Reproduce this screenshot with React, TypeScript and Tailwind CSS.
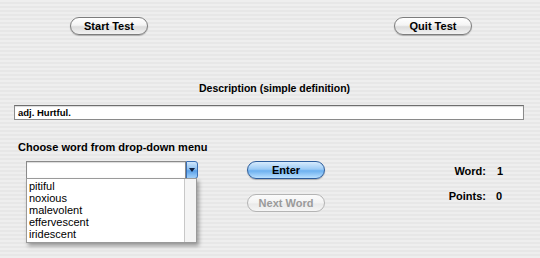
import React from "react";

const font = "font-['Lucida_Grande','Liberation_Sans',Arial,sans-serif]";

function AquaButton({ label, className = "" }: { label: string; className?: string }) {
  return (
    <div
      className={`h-[18px] w-[78px] rounded-full border border-[#7d7d7d] bg-[linear-gradient(to_bottom,#ffffff_0%,#f4f4f4_45%,#dcdcdc_55%,#f2f2f2_100%)] shadow-[0_1px_1px_rgba(0,0,0,0.25)] flex items-center justify-center text-[11px] font-bold text-black leading-none ${className}`}
    >
      {label}
    </div>
  );
}

export default function App() {
  const words = ["pitiful", "noxious", "malevolent", "effervescent", "iridescent"];
  return (
    <div
      className={`w-[540px] h-[258px] overflow-hidden ${font} text-black bg-[repeating-linear-gradient(to_bottom,#eeeeee_0px,#eeeeee_2px,#e7e7e7_2px,#e7e7e7_4px)] flex flex-col`}
    >
      <div className="flex pt-[17px] pl-[70px]">
        <AquaButton label="Start Test" />
        <AquaButton label="Quit Test" className="ml-[246px]" />
      </div>

      <div className="mt-[47px] pl-[199px] text-[10.5px] font-bold leading-[13px]">
        Description (simple definition)
      </div>

      <div className="mt-[10px] ml-[14px] w-[510px] h-[15px] bg-white border border-[#8a8a8a] border-t-[#6e6e6e] shadow-[inset_0_1px_1px_rgba(0,0,0,0.15)] flex items-center pl-[3px] text-[9.5px] font-bold leading-none">
        adj. Hurtful.
      </div>

      <div className="flex mt-[21px]">
        <div className="flex flex-col ml-[18px] w-[200px]">
          <div className="text-[11px] font-bold leading-[13px]">Choose word from drop-down menu</div>
          <div className="relative mt-[7px] ml-[8px] w-[172px] h-[18px] flex">
            <div className="flex-1 bg-white border border-[#8a8a8a] shadow-[inset_0_1px_1px_rgba(0,0,0,0.15)]" />
            <div className="w-[12px] rounded-r-[3px] border border-[#3a6fb4] bg-[linear-gradient(to_bottom,#cfe6fb_0%,#8ec0f0_45%,#5aa0e8_55%,#a4d2fb_100%)] flex items-center justify-center">
              <div className="w-0 h-0 border-l-[3px] border-r-[3px] border-t-[4px] border-l-transparent border-r-transparent border-t-[#102040]" />
            </div>
            <div className="absolute left-0 top-[17px] w-[171px] h-[65px] bg-white border border-[#9a9a9a] shadow-[2px_3px_4px_rgba(0,0,0,0.35)] flex">
              <div className="flex-1 flex flex-col pl-[2px] pt-[1px] text-[11px] leading-[12px]">
                {words.map((w) => (
                  <div key={w}>{w}</div>
                ))}
              </div>
              <div className="w-[12px] border-l border-[#c8c8c8] bg-[#f4f4f4]" />
            </div>
          </div>
        </div>

        <div className="flex flex-col ml-[29px] mt-[20px]">
          <div className="h-[18px] w-[78px] rounded-full border border-[#2d5d9c] bg-[linear-gradient(to_bottom,#d6ebfd_0%,#9ccbf6_45%,#6cb0ef_55%,#b9e0ff_100%)] shadow-[0_1px_1px_rgba(0,0,0,0.25)] flex items-center justify-center text-[11px] font-bold leading-none">
            Enter
          </div>
          <div className="mt-[15px] h-[18px] w-[78px] rounded-full border border-[#b4b4b4] bg-[linear-gradient(to_bottom,#fbfbfb_0%,#f3f3f3_50%,#e9e9e9_55%,#f5f5f5_100%)] flex items-center justify-center text-[11px] font-bold leading-none text-[#9a9a9a]">
            Next Word
          </div>
        </div>

        <div className="flex flex-col ml-[122px] mt-[24px] text-[11px] font-bold leading-[13px]">
          <div className="flex">
            <span className="w-[39px] text-right">Word:</span>
            <span className="ml-[11px]">1</span>
          </div>
          <div className="flex mt-[12px]">
            <span className="w-[39px] text-right">Points:</span>
            <span className="ml-[10px]">0</span>
          </div>
        </div>
      </div>
    </div>
  );
}
